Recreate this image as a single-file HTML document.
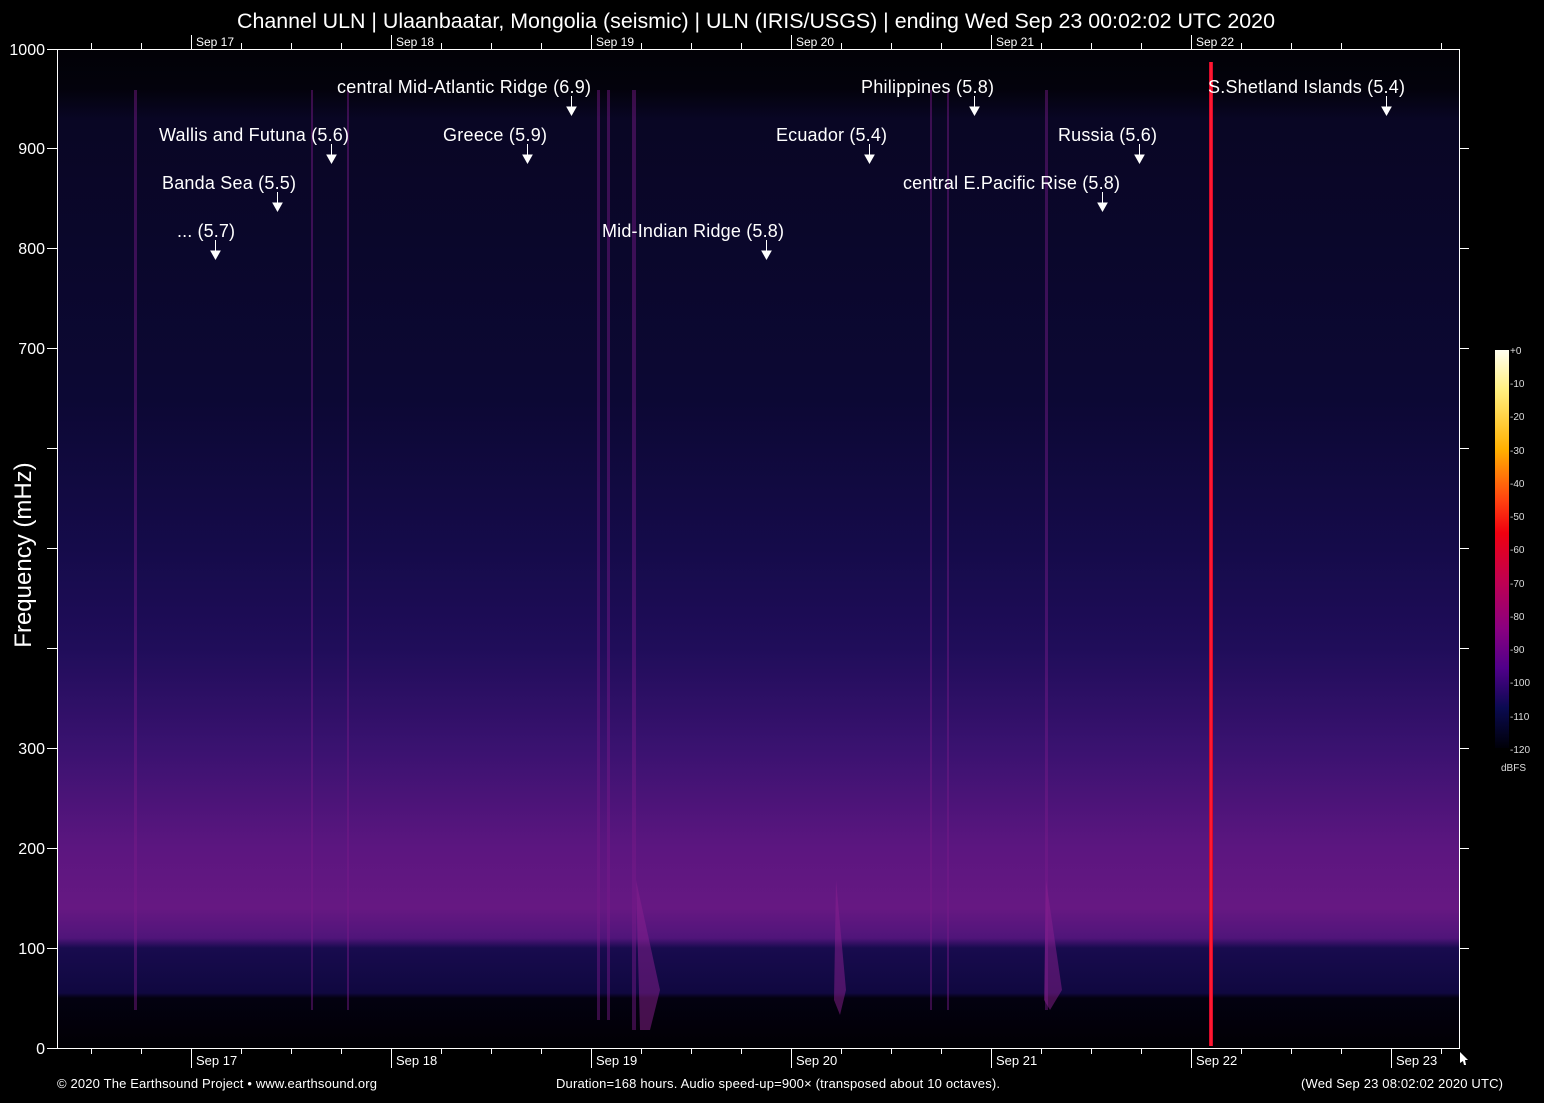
<!DOCTYPE html>
<html><head><meta charset="utf-8"><style>
html,body{margin:0;padding:0;background:#000;}
body{width:1544px;height:1098px;overflow:hidden;font-family:"Liberation Sans",sans-serif;}
</style></head><body>
<svg width="1544" height="1098" viewBox="0 0 1544 1098" xmlns="http://www.w3.org/2000/svg" font-family="Liberation Sans, sans-serif">
<defs>
<linearGradient id="bg" x1="0" y1="49" x2="0" y2="1048" gradientUnits="userSpaceOnUse">
<stop offset="0" stop-color="#020106"/>
<stop offset="0.04" stop-color="#03020c"/>
<stop offset="0.07" stop-color="#090624"/>
<stop offset="0.35" stop-color="#0c0834"/>
<stop offset="0.5" stop-color="#150b4a"/>
<stop offset="0.6" stop-color="#200d5a"/>
<stop offset="0.7" stop-color="#3a1270"/>
<stop offset="0.8" stop-color="#5c1680"/>
<stop offset="0.86" stop-color="#661882"/>
<stop offset="0.89" stop-color="#50157a"/>
<stop offset="0.9" stop-color="#180b4e"/>
<stop offset="0.945" stop-color="#100840"/>
<stop offset="0.95" stop-color="#030110"/>
<stop offset="1" stop-color="#010004"/>
</linearGradient>
<linearGradient id="cb" x1="0" y1="0" x2="0" y2="1">
<stop offset="0" stop-color="#fffff0"/>
<stop offset="0.1" stop-color="#fff080"/>
<stop offset="0.25" stop-color="#ffb000"/>
<stop offset="0.38" stop-color="#ff4010"/>
<stop offset="0.46" stop-color="#f00010"/>
<stop offset="0.58" stop-color="#c00050"/>
<stop offset="0.7" stop-color="#8a0080"/>
<stop offset="0.8" stop-color="#50008a"/>
<stop offset="0.9" stop-color="#0a0a50"/>
<stop offset="1" stop-color="#000008"/>
</linearGradient>
</defs>
<rect x="57" y="49" width="1402" height="999" fill="url(#bg)"/>
<g fill="#7a1a8a" opacity="0.45">
<rect x="134" y="90" width="3" height="920"/>
<rect x="311" y="90" width="2" height="920"/>
<rect x="347" y="90" width="2" height="920"/>
<rect x="597" y="90" width="3" height="930"/>
<rect x="607" y="90" width="3" height="930"/>
<rect x="632" y="90" width="4" height="940"/>
<rect x="930" y="90" width="2" height="920"/>
<rect x="947" y="90" width="2" height="920"/>
<rect x="1045" y="90" width="3" height="920"/>
</g>
<g fill="#8a2090" opacity="0.5">
<path d="M636 880 L660 990 L650 1030 L640 1030 Z"/>
<path d="M1046 880 L1062 990 L1050 1010 L1044 1000 Z"/>
<path d="M836 880 L846 990 L840 1015 L834 1000 Z"/>
</g>
<rect x="1209" y="62" width="4" height="984" fill="#d80a2a"/>
<rect x="1210" y="62" width="2" height="984" fill="#ff1830"/>
<g stroke="#fff" stroke-width="1" fill="none">
<path d="M57.5 49V1048.5H1459.5V49"/>
<path d="M57 49.5H1459"/>
</g>
<g stroke="#fff" stroke-width="1">
<path d="M47 1048.5h10M47 948.5h10M47 848.5h10M47 748.5h10M47 648.5h10M47 548.5h10M47 448.5h10M47 348.5h10M47 248.5h10M47 148.5h10M47 49.5h10"/>
<path d="M1459 948.5h10M1459 848.5h10M1459 748.5h10M1459 648.5h10M1459 548.5h10M1459 448.5h10M1459 348.5h10M1459 248.5h10M1459 148.5h10"/>
<path d="M91.5 1048v6M141.5 1048v6M241.5 1048v6M291.5 1048v6M341.5 1048v6M441.5 1048v6M491.5 1048v6M541.5 1048v6M641.5 1048v6M691.5 1048v6M741.5 1048v6M841.5 1048v6M891.5 1048v6M941.5 1048v6M1041.5 1048v6M1091.5 1048v6M1141.5 1048v6M1241.5 1048v6M1291.5 1048v6M1341.5 1048v6M1441.5 1048v6"/>
<path d="M191.5 1048v20M391.5 1048v20M591.5 1048v20M791.5 1048v20M991.5 1048v20M1191.5 1048v20M1391.5 1048v20"/>
<path d="M91.5 43v6M141.5 43v6M241.5 43v6M291.5 43v6M341.5 43v6M441.5 43v6M491.5 43v6M541.5 43v6M641.5 43v6M691.5 43v6M741.5 43v6M841.5 43v6M891.5 43v6M941.5 43v6M1041.5 43v6M1091.5 43v6M1141.5 43v6M1241.5 43v6M1291.5 43v6M1341.5 43v6M1441.5 43v6"/>
<path d="M191.5 35v14M391.5 35v14M591.5 35v14M791.5 35v14M991.5 35v14M1191.5 35v14"/>
</g>
<g fill="#fff" font-size="16" text-anchor="end">
<text x="45" y="1054">0</text><text x="45" y="954">100</text><text x="45" y="854">200</text><text x="45" y="754">300</text><text x="45" y="354">700</text><text x="45" y="254">800</text><text x="45" y="154">900</text><text x="45" y="55">1000</text>
</g>
<text transform="translate(31,555) rotate(-90)" fill="#fff" font-size="24" text-anchor="middle">Frequency (mHz)</text>
<g fill="#fff" font-size="12">
<text x="196" y="46">Sep 17</text><text x="396" y="46">Sep 18</text><text x="596" y="46">Sep 19</text><text x="796" y="46">Sep 20</text><text x="996" y="46">Sep 21</text><text x="1196" y="46">Sep 22</text>
</g>
<g fill="#fff" font-size="13">
<text x="196" y="1065">Sep 17</text><text x="396" y="1065">Sep 18</text><text x="596" y="1065">Sep 19</text><text x="796" y="1065">Sep 20</text><text x="996" y="1065">Sep 21</text><text x="1196" y="1065">Sep 22</text><text x="1396" y="1065">Sep 23</text>
</g>
<text x="756" y="28" fill="#fff" font-size="21" text-anchor="middle" textLength="1038" lengthAdjust="spacingAndGlyphs">Channel ULN | Ulaanbaatar, Mongolia (seismic) | ULN (IRIS/USGS) | ending Wed Sep 23 00:02:02 UTC 2020</text>
<g fill="#fff" font-size="13">
<text x="57" y="1088" textLength="320">© 2020 The Earthsound Project • www.earthsound.org</text>
<text x="556" y="1088" textLength="444">Duration=168 hours. Audio speed-up=900× (transposed about 10 octaves).</text>
<text x="1301" y="1088" textLength="202">(Wed Sep 23 08:02:02 2020 UTC)</text>
</g>
<g fill="#fff" font-size="18">
<text x="337" y="93" textLength="254">central Mid-Atlantic Ridge (6.9)</text>
<text x="861" y="93" textLength="133">Philippines (5.8)</text>
<text x="1208" y="93" textLength="197">S.Shetland Islands (5.4)</text>
<text x="159" y="141" textLength="190">Wallis and Futuna (5.6)</text>
<text x="443" y="141" textLength="104">Greece (5.9)</text>
<text x="776" y="141" textLength="111">Ecuador (5.4)</text>
<text x="1058" y="141" textLength="99">Russia (5.6)</text>
<text x="162" y="189" textLength="134">Banda Sea (5.5)</text>
<text x="903" y="189" textLength="217">central E.Pacific Rise (5.8)</text>
<text x="177" y="237" textLength="58">... (5.7)</text>
<text x="602" y="237" textLength="182">Mid-Indian Ridge (5.8)</text>
</g>
<g stroke="#fff" stroke-width="1" fill="#fff">
<path d="M571.5 96v12"/><path d="M567 107h9l-4.5 8z"/>
<path d="M974.5 96v12"/><path d="M970 107h9l-4.5 8z"/>
<path d="M1386.5 96v12"/><path d="M1382 107h9l-4.5 8z"/>
<path d="M331.5 144v12"/><path d="M327 155h9l-4.5 8z"/>
<path d="M527.5 144v12"/><path d="M523 155h9l-4.5 8z"/>
<path d="M869.5 144v12"/><path d="M865 155h9l-4.5 8z"/>
<path d="M1139.5 144v12"/><path d="M1135 155h9l-4.5 8z"/>
<path d="M277.5 192v12"/><path d="M273 203h9l-4.5 8z"/>
<path d="M1102.5 192v12"/><path d="M1098 203h9l-4.5 8z"/>
<path d="M215.5 240v12"/><path d="M211 251h9l-4.5 8z"/>
<path d="M766.5 240v12"/><path d="M762 251h9l-4.5 8z"/>
</g>
<path d="M1460 1052l8 8-3 0 1 5-2 0-1-4-3 2z" fill="#fff"/>
<rect x="1495" y="350" width="14" height="398" fill="url(#cb)"/>
<g fill="#ddd" font-size="10">
<text x="1510" y="354">+0</text><text x="1510" y="387">-10</text><text x="1510" y="420">-20</text><text x="1510" y="454">-30</text><text x="1510" y="487">-40</text><text x="1510" y="520">-50</text><text x="1510" y="553">-60</text><text x="1510" y="587">-70</text><text x="1510" y="620">-80</text><text x="1510" y="653">-90</text><text x="1510" y="686">-100</text><text x="1510" y="720">-110</text><text x="1510" y="753">-120</text>
<text x="1501" y="771">dBFS</text>
</g>
</svg>
</body></html>
